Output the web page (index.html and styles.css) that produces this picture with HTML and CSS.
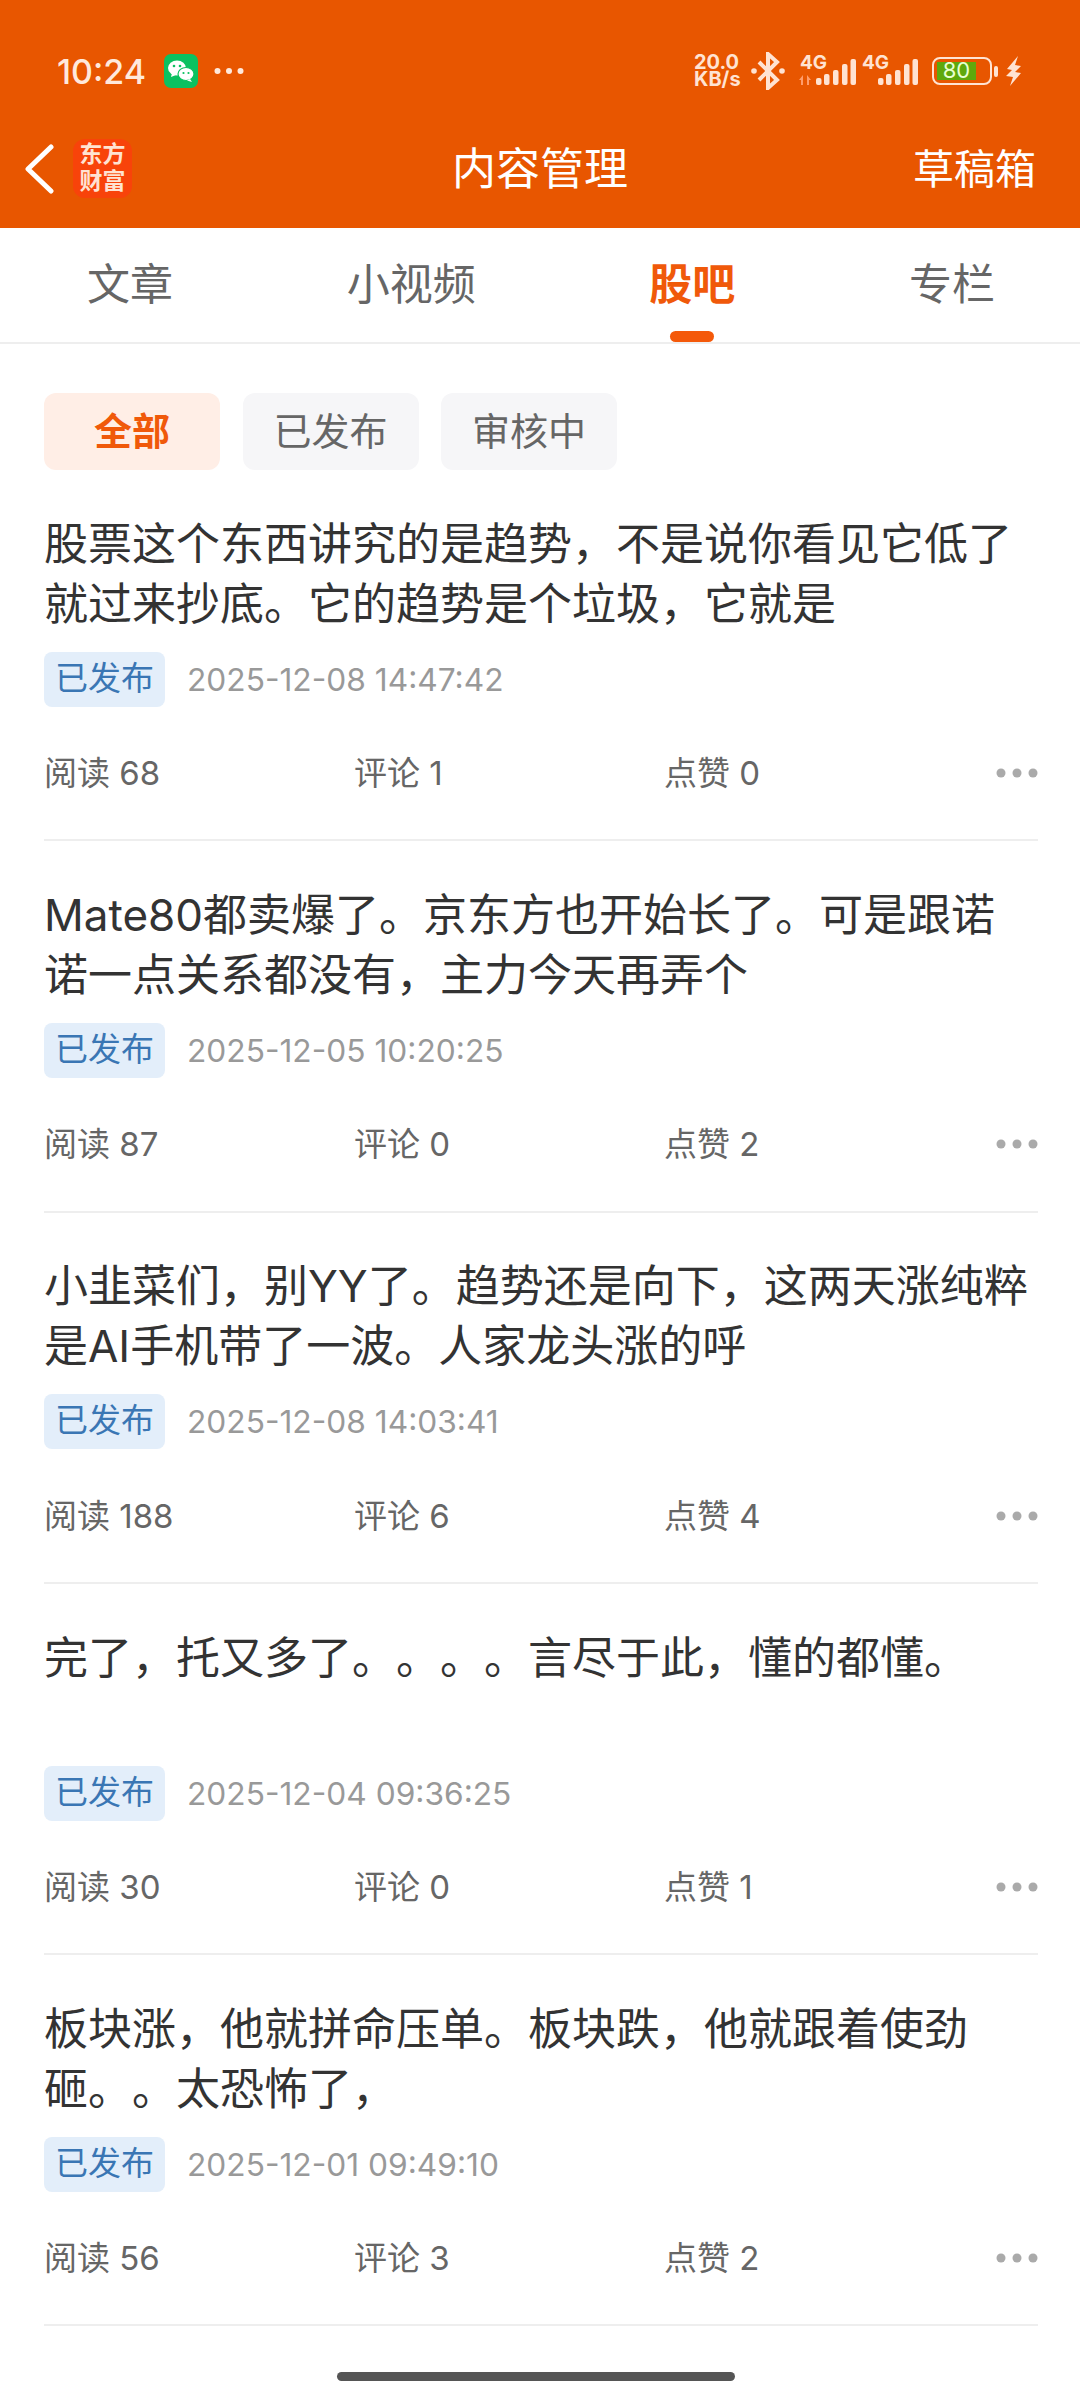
FILE: index.html
```html
<!DOCTYPE html>
<html lang="zh-CN">
<head>
    <meta charset="UTF-8">
    <meta name="viewport" content="width=device-width, initial-scale=1.0">
    <title>内容管理</title>
    <link rel="stylesheet" href="styles.css">
</head>
<body>
    <header class="top">
        <div class="status">
            <div class="status-left">
                <span class="clock">10:24</span>
                <svg class="wechat" viewBox="0 0 34 34">
                    <rect width="34" height="34" rx="7" fill="#0bc160"/>
                    <ellipse cx="13" cy="14" rx="9" ry="7.5" fill="#fff"/>
                    <path d="M8 19l-1 4 5-2z" fill="#fff"/>
                    <ellipse cx="22" cy="20" rx="8" ry="6.5" fill="#fff" stroke="#0bc160" stroke-width="1.2"/>
                    <path d="M26 25l2 3-5-1.500z" fill="#fff"/>
                    <circle cx="10" cy="12" r="1.300" fill="#0bc160"/>
                    <circle cx="16" cy="12" r="1.300" fill="#0bc160"/>
                    <circle cx="19.500" cy="19" r="1.100" fill="#0bc160"/>
                    <circle cx="24.500" cy="19" r="1.100" fill="#0bc160"/>
                </svg>
                <svg class="more-dots" viewBox="0 0 30 8">
                    <circle cx="3.500" cy="4" r="3" fill="#ffe9dc"/>
                    <circle cx="15" cy="4" r="3" fill="#ffe9dc"/>
                    <circle cx="26.500" cy="4" r="3" fill="#ffe9dc"/>
                </svg>
            </div>
            <div class="status-right">
                <span class="speed">20.0<br>KB/s</span>
                <svg class="bt" viewBox="0 0 34 38" fill="none" stroke="#ffe3d2" stroke-width="4">
                    <path d="M8 10l18 18-9 8V2l9 8-18 18"/>
                    <circle cx="3" cy="19" r="2.800" fill="#ffe3d2" stroke="none"/>
                    <circle cx="31" cy="19" r="2.800" fill="#ffe3d2" stroke="none"/>
                </svg>
                <svg class="signal" viewBox="0 -7 60 39">
                    <text x="3" y="14" class="net">4G</text>
                    <path d="M2 25l4-5v10H4v-5zM10 20l4 5H12v5h-2z" fill="#ff9d6c"/>
                    <rect x="19" y="23" width="5.500" height="7" rx="2" fill="#ffe3d2"/>
                    <rect x="27" y="19" width="5.500" height="11" rx="2" fill="#ffe3d2"/>
                    <rect x="36" y="15" width="5.500" height="15" rx="2" fill="#ffe3d2"/>
                    <rect x="45" y="9" width="5.500" height="21" rx="2" fill="#ffe3d2"/>
                    <rect x="53.500" y="4" width="5.500" height="26" rx="2" fill="#ffe3d2"/>
                </svg>
                <svg class="signal" viewBox="0 -7 60 39">
                    <text x="3" y="14" class="net">4G</text>
                    <rect x="19" y="23" width="5.500" height="7" rx="2" fill="#ffe3d2"/>
                    <rect x="27" y="19" width="5.500" height="11" rx="2" fill="#ffe3d2"/>
                    <rect x="36" y="15" width="5.500" height="15" rx="2" fill="#ffe3d2"/>
                    <rect x="45" y="9" width="5.500" height="21" rx="2" fill="#ffe3d2"/>
                    <rect x="53.500" y="4" width="5.500" height="26" rx="2" fill="#ffe3d2"/>
                </svg>
                <div class="battery">
                    <div class="battery-body"><span class="battery-level">80</span></div>
                    <div class="battery-tip"></div>
                </div>
                <svg class="bolt" viewBox="0 0 17 30">
                    <path d="M13 0L2 13l5 1-6 6 7 1-3 9 11-13-6-1 6-6-6-1z" fill="#ffe3d2"/>
                </svg>
            </div>
        </div>
        <div class="nav">
            <div class="nav-left">
                <svg class="back" viewBox="0 0 30 50" fill="none" stroke="#fff" stroke-width="5" stroke-linecap="round" stroke-linejoin="round">
                    <path d="M27 3L4 25l23 22"/>
                </svg>
                <div class="logo">东方<br>财富</div>
            </div>
            <div class="nav-title">内容管理</div>
            <div class="nav-right">草稿箱</div>
        </div>
    </header>

    <nav class="tabs">
        <div class="tab">文章</div>
        <div class="tab">小视频</div>
        <div class="tab active">股吧</div>
        <div class="tab">专栏</div>
    </nav>

    <div class="filters">
        <div class="pill on">全部</div>
        <div class="pill">已发布</div>
        <div class="pill">审核中</div>
    </div>

    <main class="list">
        <article class="item">
            <p class="item-title">股票这个东西讲究的是趋势，不是说你看见它低了就过来抄底。它的趋势是个垃圾，它就是</p>
            <div class="meta"><span class="badge">已发布</span><span class="date">2025-12-08 14:47:42</span></div>
            <div class="stats">
                <span class="stat">阅读 68</span><span class="stat">评论 1</span><span class="stat">点赞 0</span>
                <svg class="item-more" viewBox="0 0 42 10"><circle cx="5" cy="5" r="4.500"/><circle cx="21" cy="5" r="4.500"/><circle cx="37" cy="5" r="4.500"/></svg>
            </div>
        </article>
        <article class="item">
            <p class="item-title">Mate80都卖爆了。京东方也开始长了。可是跟诺诺一点关系都没有，主力今天再弄个</p>
            <div class="meta"><span class="badge">已发布</span><span class="date">2025-12-05 10:20:25</span></div>
            <div class="stats">
                <span class="stat">阅读 87</span><span class="stat">评论 0</span><span class="stat">点赞 2</span>
                <svg class="item-more" viewBox="0 0 42 10"><circle cx="5" cy="5" r="4.500"/><circle cx="21" cy="5" r="4.500"/><circle cx="37" cy="5" r="4.500"/></svg>
            </div>
        </article>
        <article class="item">
            <p class="item-title">小韭菜们，别YY了。趋势还是向下，这两天涨纯粹是AI手机带了一波。人家龙头涨的呼</p>
            <div class="meta"><span class="badge">已发布</span><span class="date">2025-12-08 14:03:41</span></div>
            <div class="stats">
                <span class="stat">阅读 188</span><span class="stat">评论 6</span><span class="stat">点赞 4</span>
                <svg class="item-more" viewBox="0 0 42 10"><circle cx="5" cy="5" r="4.500"/><circle cx="21" cy="5" r="4.500"/><circle cx="37" cy="5" r="4.500"/></svg>
            </div>
        </article>
        <article class="item">
            <p class="item-title">完了，托又多了。。。。言尽于此，懂的都懂。</p>
            <div class="meta"><span class="badge">已发布</span><span class="date">2025-12-04 09:36:25</span></div>
            <div class="stats">
                <span class="stat">阅读 30</span><span class="stat">评论 0</span><span class="stat">点赞 1</span>
                <svg class="item-more" viewBox="0 0 42 10"><circle cx="5" cy="5" r="4.500"/><circle cx="21" cy="5" r="4.500"/><circle cx="37" cy="5" r="4.500"/></svg>
            </div>
        </article>
        <article class="item">
            <p class="item-title">板块涨，他就拼命压单。板块跌，他就跟着使劲砸。。太恐怖了，</p>
            <div class="meta"><span class="badge">已发布</span><span class="date">2025-12-01 09:49:10</span></div>
            <div class="stats">
                <span class="stat">阅读 56</span><span class="stat">评论 3</span><span class="stat">点赞 2</span>
                <svg class="item-more" viewBox="0 0 42 10"><circle cx="5" cy="5" r="4.500"/><circle cx="21" cy="5" r="4.500"/><circle cx="37" cy="5" r="4.500"/></svg>
            </div>
        </article>
    </main>

    <div class="home-bar"></div>
</body>
</html>
```

FILE: styles.css
```css
* {
    box-sizing: border-box;
}
html, body {
    margin: 0;
    padding: 0;
}
body {
    width: 1080px;
    height: 2400px;
    position: relative;
    overflow: hidden;
    background: #fff;
    font-family: "Inter", "Noto Sans CJK SC", sans-serif;
    color: #333;
    text-spacing-trim: space-all;
}

/* orange header */
.top {
    height: 228px;
    background: #e85600;
}
.status {
    height: 109px;
    padding: 53px 58px 0 57px;
    display: flex;
    justify-content: space-between;
    align-items: flex-start;
}
.status-left {
    display: flex;
    align-items: center;
    height: 36px;
}
.clock {
    font-size: 34px;
    font-weight: 500;
    color: #ffe9dc;
    width: 107px;
}
.wechat {
    width: 34px;
    height: 34px;
}
.more-dots {
    width: 30px;
    height: 8px;
    margin-left: 16px;
}
.status-right {
    display: flex;
    align-items: center;
    height: 36px;
}
.speed {
    font-size: 20px;
    line-height: 17px;
    font-weight: 700;
    color: #ffe3d2;
    width: 57px;
}
.bt {
    width: 34px;
    height: 38px;
}
.signal {
    width: 60px;
    height: 39px;
    margin-left: 12px;
    margin-top: -7px;
}
.signal + .signal {
    margin-left: 2px;
}
.net {
    font-size: 19px;
    font-weight: 700;
    fill: #ffe3d2;
}
.battery {
    display: flex;
    align-items: center;
    margin-left: 13px;
}
.battery-body {
    width: 60px;
    height: 28px;
    border: 2.500px solid #ffe3d2;
    border-radius: 8px;
    padding: 3px 3px;
}
.battery-level {
    display: block;
    width: 39px;
    height: 100%;
    background: #5fa80c;
    color: #e9ffd0;
    font-size: 22px;
    line-height: 17px;
    text-align: center;
}
.battery-tip {
    width: 4px;
    height: 11px;
    margin-left: 2px;
    background: #ffe3d2;
    border-radius: 2px;
}
.bolt {
    width: 17px;
    height: 30px;
    margin-left: 7px;
}
.nav {
    height: 119px;
    padding: 0 44px 0 24px;
    display: flex;
    align-items: center;
    justify-content: space-between;
    position: relative;
}
.nav-left {
    display: flex;
    align-items: center;
}
.back {
    width: 30px;
    height: 50px;
}
.logo {
    width: 59px;
    height: 59px;
    margin-left: 19px;
    background: #f8430a;
    border-radius: 12px;
    color: #ffe3d2;
    font-size: 23px;
    line-height: 27px;
    font-weight: 700;
    text-align: center;
    padding-top: 2px;
}
.nav-title {
    position: absolute;
    left: 0;
    right: 0;
    padding-bottom: 6px;
    text-align: center;
    color: #fff;
    font-size: 44px;
    pointer-events: none;
}
.nav-right {
    padding-bottom: 6px;
    color: #fff;
    font-size: 41px;
}

/* tabs */
.tabs {
    height: 116px;
    padding: 0 85px 0 87px;
    display: flex;
    justify-content: space-between;
    border-bottom: 2px solid #eeeeee;
}
.tab {
    font-size: 43px;
    line-height: 112px;
    color: #666;
    position: relative;
}
.tab.active {
    color: #f0590a;
    font-weight: 700;
}
.tab.active::after {
    content: "";
    position: absolute;
    left: 50%;
    bottom: 0;
    width: 44px;
    height: 11px;
    margin-left: -22px;
    background: #f4590a;
    border-radius: 6px;
}

/* filter pills */
.filters {
    display: flex;
    gap: 22.500px;
    padding: 49px 44px 0;
}
.pill {
    width: 176px;
    height: 77px;
    border-radius: 12px;
    background: #f6f6f8;
    color: #666;
    font-size: 38px;
    line-height: 77px;
    text-align: center;
}
.pill.on {
    background: #ffeee6;
    color: #f0590a;
    font-weight: 700;
}

/* list */
.list {
    padding: 0 42px 0 44px;
}
.item {
    padding-top: 43.750px;
    border-bottom: 2px solid #eeeeee;
}
.item-title {
    margin: 0;
    height: 120px;
    font-size: 44px;
    line-height: 60px;
    color: #333;
}
.meta {
    display: flex;
    align-items: center;
    margin-top: 18px;
    height: 55px;
}
.badge {
    width: 121px;
    height: 55px;
    border-radius: 8px;
    background: #e3eefa;
    color: #3a76b4;
    font-size: 33px;
    line-height: 53px;
    text-align: center;
}
.date {
    margin-left: 22px;
    font-size: 31.700px;
    color: #999;
}
.stats {
    display: flex;
    align-items: center;
    height: 132.500px;
    padding-bottom: 4px;
}
.stat {
    width: 310px;
    font-size: 33px;
    color: #666;
}
.item-more {
    width: 42px;
    height: 10px;
    margin-left: auto;
    margin-top: 4px;
    fill: #aaa;
}

.home-bar {
    position: absolute;
    left: 337px;
    top: 2372px;
    width: 398px;
    height: 9px;
    border-radius: 5px;
    background: #555;
}
```
